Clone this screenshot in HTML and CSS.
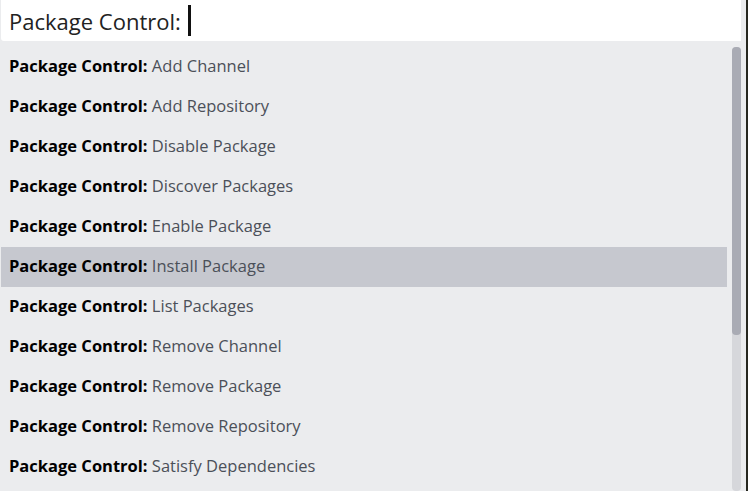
FILE: index.html
```html
<!DOCTYPE html>
<html>
<head>
<meta charset="utf-8">
<link rel="stylesheet" href="styles.css">
</head>
<body>
<div class="frame">
  <div class="main">
    <div class="input"><span class="query">Package Control:</span><span class="caret"></span></div>
    <div class="body">
      <ul class="list">
        <li class="row"><b>Package Control:</b> Add Channel</li>
        <li class="row"><b>Package Control:</b> Add Repository</li>
        <li class="row"><b>Package Control:</b> Disable Package</li>
        <li class="row"><b>Package Control:</b> Discover Packages</li>
        <li class="row"><b>Package Control:</b> Enable Package</li>
        <li class="row selected"><b>Package Control:</b> Install Package</li>
        <li class="row"><b>Package Control:</b> List Packages</li>
        <li class="row"><b>Package Control:</b> Remove Channel</li>
        <li class="row"><b>Package Control:</b> Remove Package</li>
        <li class="row"><b>Package Control:</b> Remove Repository</li>
        <li class="row"><b>Package Control:</b> Satisfy Dependencies</li>
      </ul>
      <div class="scrollbar"><div class="thumb"></div></div>
    </div>
  </div>
</div>
</body>
</html>
```
FILE: styles.css
```css
html, body {
  margin: 0;
  padding: 0;
  background: #ebecee;
}
.frame {
  width: 748px;
  height: 491px;
  display: flex;
  overflow: hidden;
  font-family: "Open Sans", "Noto Sans", sans-serif;
}
.main {
  width: 746px;
  height: 491px;
  background: #ebecee;
  border-right: 2px solid #26271f;
  box-sizing: content-box;
}
.input {
  margin-left: 1px;
  width: 740px;
  height: 41px;
  background: #ffffff;
  border-bottom-left-radius: 3px;
  display: flex;
  align-items: center;
  padding-left: 8px;
  box-sizing: border-box;
}
.query {
  font-size: 22px;
  color: #222222;
}
.caret {
  width: 3px;
  height: 31px;
  background: #111111;
  margin-left: 7px;
}
.body {
  display: flex;
  padding-top: 6px;
}
.list {
  list-style: none;
  margin: 0 0 0 1px;
  padding: 0;
  width: 726px;
}
.row {
  height: 40px;
  display: flex;
  align-items: center;
  padding-left: 8px;
  padding-bottom: 4px;
  box-sizing: border-box;
  font-size: 16.5px;
  color: #4b5059;
  white-space: pre;
}
.row b {
  color: #000000;
  font-weight: 700;
}
.row.selected {
  background: #c6c8cf;
}
.scrollbar {
  margin-left: 5px;
  width: 9px;
  height: 444px;
  background: #d6d7db;
  border-radius: 4px;
}
.thumb {
  height: 288px;
  background: #a9abb4;
  border-radius: 4px;
}
```
